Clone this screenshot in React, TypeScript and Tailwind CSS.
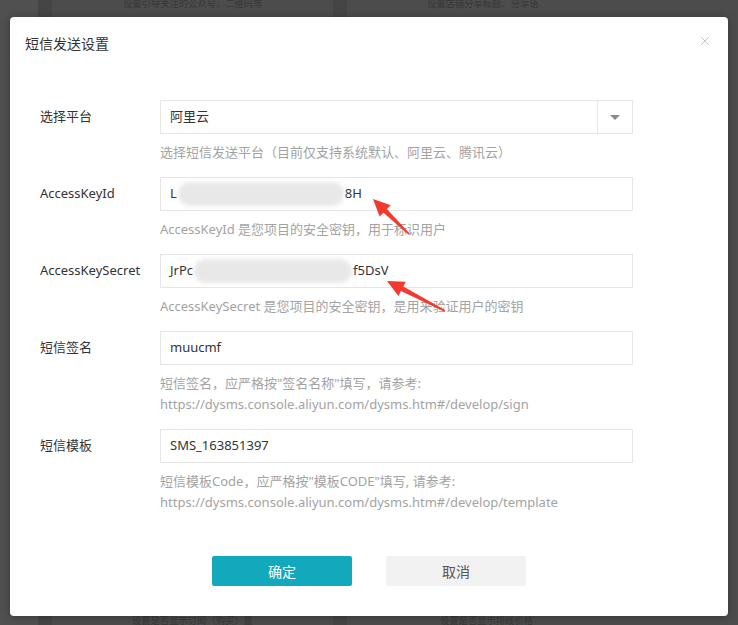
import { X } from "lucide-react";

type Field = {
  label: string;
  help: string[];
  value: React.ReactNode;
  select?: boolean;
};

// blurred / mosaic part of a masked secret
function Blur({ w }: { w: number }) {
  return (
    <span
      className="mx-[1px] inline-block h-[24px] rounded-full bg-[#e8e8e8] blur-[2px]"
      style={{ width: w }}
    />
  );
}

const FIELDS: Field[] = [
  {
    label: "选择平台",
    value: "阿里云",
    select: true,
    help: ["选择短信发送平台（目前仅支持系统默认、阿里云、腾讯云）"],
  },
  {
    label: "AccessKeyId",
    value: (
      <span className="flex items-center">
        L<Blur w={166} />8H
      </span>
    ),
    help: ["AccessKeyId 是您项目的安全密钥，用于标识用户"],
  },
  {
    label: "AccessKeySecret",
    value: (
      <span className="flex items-center">
        JrPc<Blur w={158} />f5DsV
      </span>
    ),
    help: ["AccessKeySecret 是您项目的安全密钥，是用来验证用户的密钥"],
  },
  {
    label: "短信签名",
    value: "muucmf",
    help: [
      "短信签名，应严格按\"签名名称\"填写，请参考:",
      "https://dysms.console.aliyun.com/dysms.htm#/develop/sign",
    ],
  },
  {
    label: "短信模板",
    value: "SMS_163851397",
    help: [
      "短信模板Code，应严格按\"模板CODE\"填写, 请参考:",
      "https://dysms.console.aliyun.com/dysms.htm#/develop/template",
    ],
  },
];

export default function App() {
  return (
    <div className="relative h-[625px] w-full overflow-hidden bg-[#4c4c4c] font-['Noto_Sans','Noto_Sans_CJK_SC',sans-serif]">
      {/* dimmed page behind the dialog */}
      <div className="flex h-full">
        <div className="w-[38px] bg-[#505050]" />
        <div className="w-[14px] bg-[#454545]" />
        <div className="flex w-[281px] flex-col justify-between pl-[71px] text-[9.3px] leading-[12px] text-[#383838]">
          <p className="-mt-[2px]">设置引导关注的公众号、二维码等</p>
          <p className="-mb-[2px] pl-[9px]">设置是否显示订阅（购买）量</p>
        </div>
        <div className="w-[14px] bg-[#454545]" />
        <div className="flex flex-1 flex-col justify-between pl-[80px] text-[9.3px] leading-[12px] text-[#383838]">
          <p className="-mt-[2px] whitespace-nowrap">设置店铺分享标题、分享语</p>
          <p className="-mb-[2px] whitespace-nowrap pl-[13px]">设置是否显示排线价格</p>
        </div>
      </div>

      {/* dialog */}
      <div className="absolute left-[10px] top-[17px] flex h-[599px] w-[718px] flex-col rounded-[4px] bg-white shadow-[0_1px_8px_rgba(0,0,0,0.3)]">
        <div className="flex h-[52px] items-center justify-between pl-[15px] pr-[16px]">
          <h2 className="text-[14px] text-[#333]">短信发送设置</h2>
          <X className="-mt-[4px] h-[14px] w-[14px] text-[#bdbdbd]" strokeWidth={1.5} />
        </div>

        <div className="flex flex-col gap-[14px] pl-[30px] pt-[31px]">
          {FIELDS.map((f) => (
            <div key={f.label} className="flex">
              <label className="flex h-[34px] w-[120px] items-center text-[13px] text-[#333]">
                {f.label}
              </label>
              <div className="w-[473px]">
                <div className="flex h-[34px] items-center border border-[#e6e6e6] text-[13px] text-[#333]">
                  <div className="flex-1 pl-[9px]">{f.value}</div>
                  {f.select && (
                    <div className="flex h-full w-[35px] items-center justify-center border-l border-[#e6e6e6]">
                      <span className="h-0 w-0 border-x-[5px] border-t-[5px] border-x-transparent border-t-[#8a8a8a]" />
                    </div>
                  )}
                </div>
                <div className="mt-[8px] text-[13px] leading-[21px] text-[#a3a3a3]">
                  {f.help.map((h) => (
                    <p key={h}>{h}</p>
                  ))}
                </div>
              </div>
            </div>
          ))}
        </div>

        <div className="mt-[43px] flex justify-center gap-[34px]">
          <button className="h-[30px] w-[140px] rounded-[2px] bg-[#12a9bc] text-[14px] text-white">
            确定
          </button>
          <button className="h-[30px] w-[140px] rounded-[2px] bg-[#f2f2f2] text-[14px] text-[#555]">
            取消
          </button>
        </div>
      </div>

      {/* red annotation arrows drawn over the screenshot */}
      <svg className="pointer-events-none absolute inset-0" width="738" height="625">
        <polygon
          fill="#f23a2f"
          points="373,199 390.8,205.2 386.9,209.1 409.6,233.4 408.4,234.6 383.5,212.7 379.6,216.6"
        />
        <polygon
          fill="#f23a2f"
          points="387,281 405.8,281.7 403.3,286.6 445.4,310.3 444.6,311.7 401,291 398.4,295.9"
        />
      </svg>
    </div>
  );
}
